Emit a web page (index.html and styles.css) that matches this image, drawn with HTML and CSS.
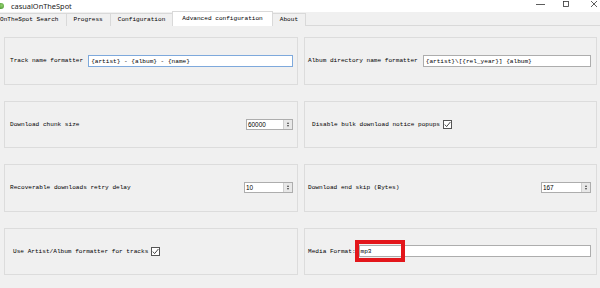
FILE: index.html
```html
<!DOCTYPE html>
<html lang="en">
<head>
    <meta charset="UTF-8">
    <title>casualOnTheSpot</title>
    <link rel="stylesheet" href="styles.css">
</head>
<body>

    <!-- Title bar -->
    <div class="titlebar">
        <span class="app-icon"></span>
        <span class="title">casualOnTheSpot</span>
        <svg class="controls" width="70" height="12" viewBox="0 0 70 12">
            <line x1="6" y1="4.5" x2="15" y2="4.5" stroke="#333" stroke-width="0.8"/>
            <rect x="33.5" y="1.5" width="5" height="5" fill="none" stroke="#333" stroke-width="0.8"/>
            <line x1="61" y1="1" x2="67" y2="7" stroke="#333" stroke-width="0.8"/>
            <line x1="67" y1="1" x2="61" y2="7" stroke="#333" stroke-width="0.8"/>
        </svg>
    </div>

    <!-- Tabs -->
    <div class="tabs">
        <div class="tab first">OnTheSpot Search</div>
        <div class="tab">Progress</div>
        <div class="tab">Configuration</div>
        <div class="tab active">Advanced configuration</div>
        <div class="tab">About</div>
    </div>

    <!-- Advanced configuration page -->
    <div class="pane">
        <div class="group g-left">
            <span class="label">Track name formatter</span>
            <div class="input focused">{artist} - {album} - {name}</div>
        </div>
        <div class="group g-right">
            <span class="label">Album directory name formatter</span>
            <div class="input">{artist}\[{rel_year}] {album}</div>
        </div>

        <div class="group g-left">
            <span class="label">Download chunk size</span>
            <div class="spin w-chunk"><span class="spin-val">60000</span><span class="spin-btns"><i class="up"></i><i class="down"></i></span></div>
        </div>
        <div class="group g-right pad-wide">
            <span class="label">Disable bulk download notice popups</span>
            <span class="check">
                <svg width="9" height="9" viewBox="0 0 9 9"><polyline points="1.8,4.6 3.6,6.6 7.4,2" fill="none" stroke="#333" stroke-width="0.9"/></svg>
            </span>
        </div>

        <div class="group g-left">
            <span class="label">Recoverable downloads retry delay</span>
            <div class="spin w-retry"><span class="spin-val">10</span><span class="spin-btns"><i class="up"></i><i class="down"></i></span></div>
        </div>
        <div class="group g-right">
            <span class="label">Download end skip (Bytes)</span>
            <div class="spin w-skip"><span class="spin-val">167</span><span class="spin-btns"><i class="up"></i><i class="down"></i></span></div>
        </div>

        <div class="group g-left pad-check">
            <span class="label">Use Artist/Album formatter for tracks</span>
            <span class="check">
                <svg width="9" height="9" viewBox="0 0 9 9"><polyline points="1.8,4.6 3.6,6.6 7.4,2" fill="none" stroke="#333" stroke-width="0.9"/></svg>
            </span>
        </div>
        <div class="group g-right">
            <span class="label">Media Format:</span>
            <div class="input media">mp3<span class="highlight"></span></div>
        </div>
    </div>

</body>
</html>
```

FILE: styles.css
```css
body {
    margin: 0;
    width: 600px;
    height: 288px;
    overflow: hidden;
    background: #f0f0f0;
    font-family: "Liberation Mono", monospace;
    font-size: 6.1px;
    color: #000;
}

/* Title bar */
.titlebar {
    height: 12px;
    background: #fff;
    display: flex;
    align-items: center;
}
.app-icon {
    width: 6px;
    height: 6px;
    margin-left: -2px;
    border-radius: 50%;
    background: radial-gradient(circle at 60% 40%, #8fcf6a, #3e8a2c);
}
.title {
    margin-left: 7px;
    font-family: "Noto Sans", sans-serif;
    font-size: 7.4px;
    color: #222;
}
.controls {
    margin-left: auto;
}

/* Tabs */
.tabs {
    display: flex;
    align-items: flex-end;
    height: 14px;
    margin-left: -7px;
    border-bottom: 1px solid #d9d9d9;
    box-sizing: border-box;
}
.tab {
    height: 12px;
    line-height: 12px;
    padding: 0 7px;
    border: 1px solid #d9d9d9;
    border-bottom: none;
    border-left: none;
    background: #f0f0f0;
    white-space: nowrap;
    margin-bottom: -1px;
}
.tab.first {
    border-left: none;
}
.tab.active {
    height: 14px;
    line-height: 13px;
    padding: 0 9px;
    background: #fff;
    border-left: 1px solid #d9d9d9;
    margin-left: -1px;
}

/* Page */
.pane {
    display: grid;
    grid-template-columns: 294px 293px;
    grid-auto-rows: 47.5px;
    column-gap: 6px;
    row-gap: 16px;
    padding: 11px 0 0 4px;
}
.group {
    display: flex;
    align-items: center;
    border: 1px solid #dcdcdc;
    background: #f0f0f0;
    box-sizing: border-box;
}
.g-left {
    padding: 0 4px 0 5px;
}
.g-right {
    padding: 0 5px 0 3px;
}
.g-right.pad-wide {
    padding-left: 7px;
}
.g-left.pad-check {
    padding-left: 8px;
}
.label {
    white-space: nowrap;
}

.input {
    position: relative;
    flex: 1;
    height: 12px;
    line-height: 11px;
    margin-left: 5px;
    padding-left: 2px;
    background: #fff;
    border: 1px solid #adadad;
    box-sizing: border-box;
    white-space: nowrap;
}
.input.focused {
    border-color: #7ea9dc;
}
.input.media {
    margin-left: 3px;
    padding-left: 1px;
}
.highlight {
    position: absolute;
    left: -5px;
    top: -6px;
    width: 50px;
    height: 22px;
    border: 4px solid #e3161b;
    box-sizing: border-box;
}

/* Spin boxes */
.spin {
    display: flex;
    height: 11px;
    margin-left: auto;
    background: #fff;
    border: 1px solid #adadad;
    box-sizing: border-box;
}
.w-chunk { width: 47px; }
.w-retry { width: 49px; }
.w-skip { width: 50px; }
.spin-val {
    flex: 1;
    line-height: 9px;
    padding-left: 1px;
    font-family: "Liberation Sans", sans-serif;
    font-size: 6.4px;
}
.spin-btns {
    width: 8px;
    display: flex;
    flex-direction: column;
    align-items: center;
    justify-content: center;
    gap: 1px;
    background: #e8e8e8;
    border-left: 1px solid #d0d0d0;
}
.spin-btns i {
    width: 0;
    height: 0;
    border-left: 1.5px solid transparent;
    border-right: 1.5px solid transparent;
}
.spin-btns .up {
    border-bottom: 2px solid #444;
}
.spin-btns .down {
    border-top: 2px solid #444;
}

/* Check boxes */
.check {
    display: flex;
    width: 9px;
    height: 9px;
    margin-left: 3px;
    background: #fff;
    border: 1px solid #555;
    box-sizing: border-box;
    align-items: center;
    justify-content: center;
}
.check svg {
    flex: none;
}
```
